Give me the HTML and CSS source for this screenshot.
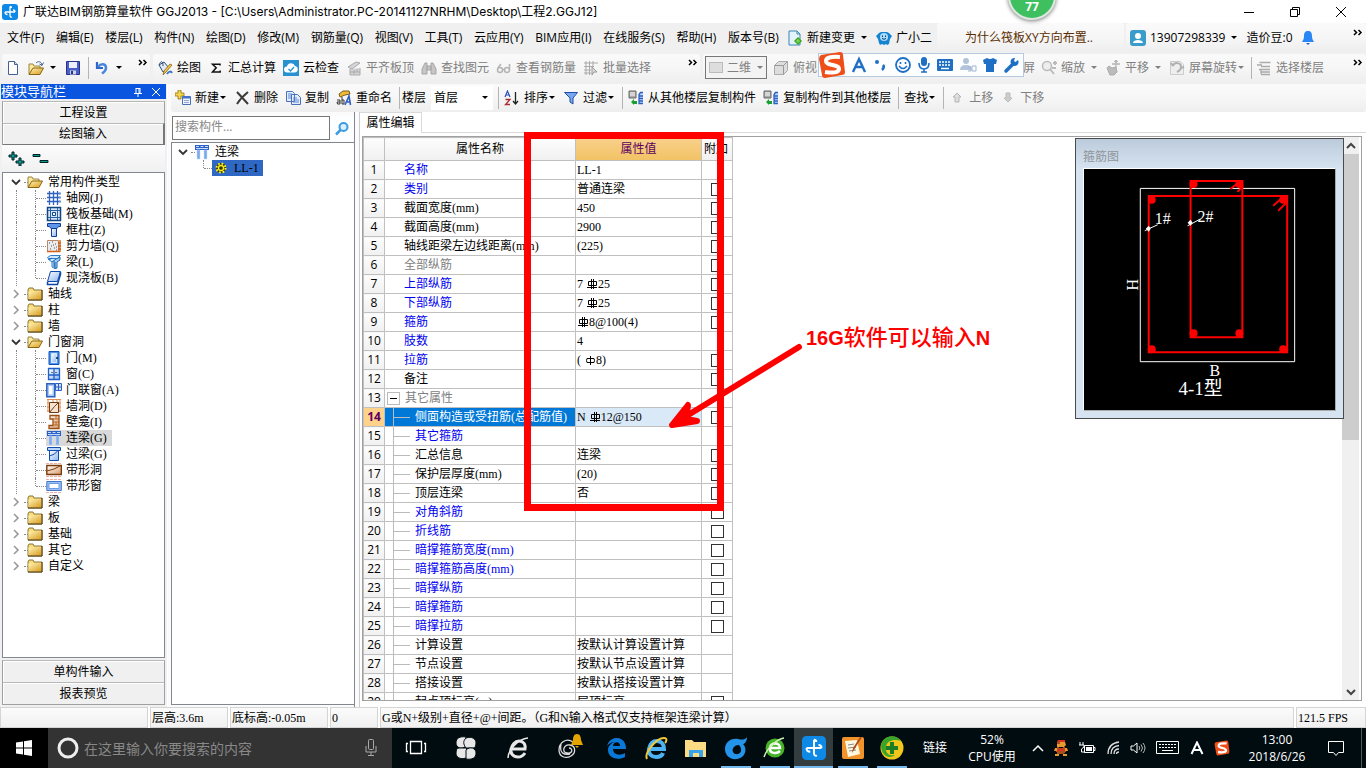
FILE: index.html
```html
<!DOCTYPE html>
<html lang="zh-CN">
<head>
<meta charset="utf-8">
<title>广联达BIM钢筋算量软件 GGJ2013</title>
<link rel="stylesheet" href="styles.css">
</head>
<body>
<svg class="defs" aria-hidden="true">
  <defs>
    <linearGradient id="gold" x1="0" y1="0" x2="1" y2="1"><stop offset="0" stop-color="#fff3b8"/><stop offset="1" stop-color="#d99a1a"/></linearGradient>
    <linearGradient id="blue" x1="0" y1="0" x2="1" y2="1"><stop offset="0" stop-color="#fff"/><stop offset="1" stop-color="#8ab4f0"/></linearGradient>
    <linearGradient id="brown" x1="0" y1="0" x2="1" y2="1"><stop offset="0" stop-color="#fff"/><stop offset="1" stop-color="#d99a6a"/></linearGradient>
  </defs>
  <symbol id="logo" viewBox="0 0 16 16"><rect width="16" height="16" rx="3" fill="#0e8ae6"/><path d="M8 2.500v9M3 8h10M3 8c0 2 1 2.500 2.500 2.500M13 8c0-1.500-1-2-2-2M8 11.500c0 1.500 1 2 2 1.500M8 2.500c1 0 1.500.5 1.500 1.500" fill="none" stroke="#fff" stroke-width="1.300"/></symbol>
  <symbol id="folder" viewBox="0 0 16 16"><path d="M1 4l1-2h4l1 2h8v10H1z" fill="#f7dd7c" stroke="#8a7430"/><path d="M1.500 5.500h13v8h-13z" fill="url(#gold)"/><path d="M15 4v10H1" fill="none" stroke="#4a3a10"/></symbol>
  <symbol id="folder-open" viewBox="0 0 16 16"><path d="M1 13V3h4l1 2h6v2" fill="#fbe9a0" stroke="#9a8340"/><path d="M1 13.500L5 7h10.500L12 13.500z" fill="url(#gold)" stroke="#8a6410"/></symbol>
  <symbol id="t-open" viewBox="0 0 16 16"><path d="M1 14V4h4l1 2h6v2" fill="#fbe9a0" stroke="#9a8340"/><path d="M1 14.500L5 8h10.500L12 14.500z" fill="url(#gold)" stroke="#8a6410"/><path d="M8 3c2-2 5-2 6 2M15.500 2.500L14 5.500 11.500 4" fill="none" stroke="#3a5f9a"/></symbol>
  <symbol id="i-axis" viewBox="0 0 16 16"><path d="M3.500 1v14M7.500 1v14M11.500 1v14M1 3.500h13M1 7.500h13M1 11.500h13" stroke="#2f62c0" stroke-width="1.300"/><path d="M13 2.500h2v2h-2zM13 6.500h2v2h-2zM13 10.500h2v2h-2z" fill="#6c93dc"/></symbol>
  <symbol id="i-raft" viewBox="0 0 16 16"><rect x="1.500" y="1.500" width="13" height="13" fill="#d5e6fa" stroke="#12457f" stroke-width="1.500"/><path d="M4.500 2v12M11.500 2v12M2 4.500h12M2 11.500h12" stroke="#2a62a5"/><path d="M6.500 6.500h3v3h-3z" fill="#fff" stroke="#12457f"/></symbol>
  <symbol id="i-col" viewBox="0 0 16 16"><path d="M1.500 1.500h13v3h-2l-1.500 2H5l-1.500-2h-2z" fill="#5d95e8" stroke="#123c94"/><path d="M5.500 6.500h5v8h-5z" fill="url(#blue)" stroke="#123c94"/></symbol>
  <symbol id="i-wall" viewBox="0 0 16 16"><path d="M1.500 2.500h11v11h-11z" fill="#ececec" stroke="#b98a68"/><path d="M3 5h1M6 4h1M9 6h1M5 8h1M8 10h1M4 11h1M10 9h1M7 7h1M10 12h1" stroke="#555"/><path d="M14 2v12M12 5h3M12 8h3M12 11h3M1 13.500h13" stroke="#d2601a" stroke-width="1.300"/></symbol>
  <symbol id="i-beam" viewBox="0 0 16 16"><path d="M1.500 3.500l3-2h10l-3 3H2zM2 5l4 3v5l3 1.500V8l5-5" fill="#cfe6fb" stroke="#2c7ed0"/><path d="M6 8l4-3 4-2v3l-3 2v6l-2 .5V8M3 6l3-2M8 13V7" fill="#9fcbf5" stroke="#1b67b5"/></symbol>
  <symbol id="i-slab" viewBox="0 0 16 16"><path d="M4.500 1.500h10l-3 10h-10z" fill="url(#blue)" stroke="#0d47a8"/><path d="M1.500 12v2.500h10l3-10V2" fill="none" stroke="#0d47a8" stroke-width="1.500"/></symbol>
  <symbol id="i-door" viewBox="0 0 16 16"><path d="M3 1.500h10v13H3z" fill="#4f94f0" stroke="#0f50b4"/><path d="M5.500 3.500h5v9h-5z" fill="url(#blue)" stroke="#dceaff"/><path d="M10 8h2" stroke="#001c58" stroke-width="1.500"/></symbol>
  <symbol id="i-window" viewBox="0 0 16 16"><path d="M2.500 2.500h11v11h-11z" fill="url(#blue)" stroke="#1f5fc8" stroke-width="1.300"/><path d="M8 2v12M2 9h12" stroke="#1f5fc8" stroke-width="1.300"/><path d="M6 6v1M10 6v1" stroke="#012"/></symbol>
  <symbol id="i-dw" viewBox="0 0 16 16"><path d="M.8 1.800h8v13h-8z" fill="#a8c9f7" stroke="#2e60c0" stroke-width="1.500"/><path d="M3 4h3.500v8.500H3z" fill="#fff"/><path d="M9.500 1.500h6v7h-6zM12.500 1v8M9 5h7" fill="#cde0fb" stroke="#2e60c0"/></symbol>
  <symbol id="i-hole" viewBox="0 0 16 16"><path d="M1 1.500h14M1 5h3M1 9h3M1 13h3M13 5h2M13 9h2M13 13h2M2 1v13M14 1v13M7 1v3M11 1v3" stroke="#e08a50"/><path d="M3.500 4.500h9v10h-9z" fill="#f7e2d0" stroke="#6d3b14"/><path d="M3.500 14.500l5-6 4-4" fill="none" stroke="#6d3b14"/></symbol>
  <symbol id="i-niche" viewBox="0 0 16 16"><path d="M4 1.500h9v13H3v-3h4V5H4z" fill="url(#brown)" stroke="#9a5014" stroke-width="1.300"/><path d="M7 5h6M7 8h6M7 11h6M10 2v3M10 8v3" stroke="#b86a2a"/></symbol>
  <symbol id="i-lian" viewBox="0 0 16 16"><path d="M1 1h14v5H1z" fill="#2a60c8"/><path d="M2 2.500h3M6.500 2.500h3M11 2.500h3M2 4.500h12" stroke="#c5dbfb"/><path d="M3 6h3v9H3zM10 6h3v9h-3z" fill="#7da9ec" stroke="#c2d8f8" stroke-width=".5"/></symbol>
  <symbol id="i-guo" viewBox="0 0 16 16"><path d="M1.500 1.500h13v3h-13z" fill="#b9d5fb" stroke="#0f4eb0"/><path d="M3.500 4.500h9v10h-9z" fill="url(#blue)" stroke="#0f4eb0"/><path d="M3.500 10l5-2 3-3" fill="none" stroke="#0f4eb0"/></symbol>
  <symbol id="i-bandh" viewBox="0 0 16 16"><path d="M0 1.500h16M0 14.500h16" stroke="#f3aaa0" stroke-dasharray="3 1"/><path d="M.8 3.500h14.500v9H.8z" fill="url(#brown)" stroke="#7c3c0a" stroke-width="1.400"/><path d="M1 9l7-2 7-3.500" stroke="#7c3c0a" fill="none"/></symbol>
  <symbol id="i-bandw" viewBox="0 0 16 16"><path d="M0 1.500h16M0 14.500h16" stroke="#f3aaa0" stroke-dasharray="3 1"/><path d="M.8 3.500h14.500v9H.8z" fill="#9cc0f5" stroke="#4374c8"/><path d="M3 5.500h10v5H3z" fill="#fff" stroke="#6d9be4"/></symbol>
  <symbol id="gear" viewBox="0 0 16 16"><circle cx="8" cy="8" r="5" fill="#3a3808"/><circle cx="8" cy="8" r="4.500" fill="none" stroke="#f7ef20" stroke-width="2" stroke-dasharray="1.800 1.730"/><circle cx="8" cy="8" r="2.500" fill="#3a3808" stroke="#f7ef20" stroke-width="1.300"/></symbol>
  <symbol id="chev-d" viewBox="0 0 10 10"><path d="M1 3l4 4 4-4" fill="none" stroke="#333" stroke-width="1.800"/></symbol>
  <symbol id="chev-r" viewBox="0 0 10 10"><path d="M3 1l4 4-4 4" fill="none" stroke="#999" stroke-width="1.600"/></symbol>
  <symbol id="more" viewBox="0 0 10 8"><path d="M1 1l2.500 2.500L1 6M5.500 1L8 3.500 5.500 6" fill="none" stroke="#000" stroke-width="1.500"/></symbol>
  <symbol id="t-new" viewBox="0 0 16 16"><path d="M3.500 1.500h6l3 3v10h-9z" fill="#fff" stroke="#44618f"/><path d="M9.500 1.500v3h3" fill="#cfdcf0" stroke="#44618f"/></symbol>
  <symbol id="t-save" viewBox="0 0 16 16"><path d="M1.500 1.500h13v13h-13z" fill="#4a60c8" stroke="#27348c"/><path d="M4 2h8v6H4z" fill="#eef1fb"/><path d="M5 10.500h6v4H5z" fill="#cfd3e6"/><path d="M6 11h2v3H6z" fill="#27348c"/></symbol>
  <symbol id="t-undo" viewBox="0 0 16 16"><path d="M3 2v6h6" fill="none" stroke="#2d66c8" stroke-width="2.200"/><path d="M4 7c3-4 8-3.500 8 1 0 3-2 4-4 5.500" fill="none" stroke="#4a86dc" stroke-width="2.500"/></symbol>
  <symbol id="t-draw" viewBox="0 0 16 16"><path d="M2 5l5-3 5 6-6 4z" fill="#dfe8f4" stroke="#30507a"/><path d="M2 5c2-5 4-4 4 1" fill="none" stroke="#30507a"/><path d="M15 5l-6 7-3 3 1-4 6-7z" fill="#f3c64a" stroke="#8a6414" stroke-width=".8"/><path d="M10 14c2-3 4-3 5-1" stroke="#3f76c8" stroke-width="2" fill="none"/></symbol>
  <symbol id="t-sum" viewBox="0 0 16 16"><path d="M12 5.500V4.200H4.500l3.700 3.500L4.500 12h7.700v-1.500" fill="none" stroke="#111" stroke-width="1.500"/></symbol>
  <symbol id="t-cloud" viewBox="0 0 16 16"><rect width="16" height="16" fill="#2892d0"/><path d="M4 12.500a3 3 0 010-6 4.200 4.200 0 018-.5 3.300 3.300 0 010 6.500z" fill="#fff"/><path d="M5.500 9l2 2 3.500-4" fill="none" stroke="#2892d0" stroke-width="1.300"/></symbol>
  <symbol id="g-align" viewBox="0 0 16 16"><path d="M2 7l8-5 4 1-8 6zM4 9v6h10V8" fill="#d5d5d5" stroke="#aaa"/><path d="M4 12h10M8 10v4M11 9v3" stroke="#aaa"/></symbol>
  <symbol id="g-find" viewBox="0 0 16 16"><path d="M2 7l2-4h2v11H1V9zM14 7l-2-4h-2v11h5V9zM6 6h4v4H6z" fill="#c6c6c6" stroke="#a5a5a5"/></symbol>
  <symbol id="g-glass" viewBox="0 0 16 16"><circle cx="4" cy="10" r="2.500" fill="none" stroke="#b5b5b5" stroke-width="1.500"/><circle cx="11" cy="10" r="2.500" fill="none" stroke="#b5b5b5" stroke-width="1.500"/><path d="M2 8l3-4M13.500 10V4M6 9.500h3" stroke="#b5b5b5" stroke-width="1.500"/></symbol>
  <symbol id="g-batch" viewBox="0 0 16 16"><path d="M3 1v14M6.500 1v14M10 1v6M1 3h14M1 6.500h10M1 10h7M1 13h7" stroke="#aaa"/><path d="M9 7l5 5h-3l-2 3z" fill="#ddd" stroke="#999"/></symbol>
  <symbol id="g-cube" viewBox="0 0 16 16"><path d="M1.500 5.500l4-4h9v9l-4 4h-9z" fill="#ddd" stroke="#aaa"/><path d="M1.500 5.500h9v9M10.500 5.500l4-4" fill="none" stroke="#999"/></symbol>
  <symbol id="g-zoom" viewBox="0 0 16 16"><circle cx="6" cy="6" r="4.500" fill="#eee" stroke="#bbb" stroke-width="1.500"/><path d="M9 9l4 5M12 3h4M14 1v4M11 8h4" stroke="#bbb" stroke-width="2"/></symbol>
  <symbol id="g-pan" viewBox="0 0 16 16"><path d="M2 8l2-2 3 2 4-1 1 5-3 3H5z" fill="#bbb" stroke="#aaa"/><path d="M11 0v8M7 4h8M11 0L9.500 2M11 0l1.500 2" stroke="#b5b5b5" stroke-width="1.300"/></symbol>
  <symbol id="g-rot" viewBox="0 0 16 16"><path d="M1.500 1.500h10l3 3v10h-13z" fill="#eee" stroke="#ccc"/><path d="M4 6c1-4 8-4 8 1 0 3-2 4-4 5M12 8l3-1M4 6L2 3" fill="none" stroke="#b0b0b0" stroke-width="2"/></symbol>
  <symbol id="g-floor" viewBox="0 0 16 16"><path d="M1 5h5M3.500 2.500h11M5 6.500h9M3 9.500h11M5 9v5M5 12h9M5 14.500h9" fill="none" stroke="#aaa" stroke-width="1.300"/></symbol>
  <symbol id="c-new" viewBox="0 0 16 16"><path d="M3 0h3v3h3v3H6v3H3V6H0V3h3z" fill="#f4d44a" stroke="#8f7410" stroke-width=".8"/><path d="M7.500 6.500h8v8h-8z" fill="#eef4ff" stroke="#4a70b8"/><path d="M7.500 7.500h8" stroke="#3f72d0" stroke-width="2"/><path d="M9 10.500h5M9 12.500h5" stroke="#8fa9d8"/></symbol>
  <symbol id="c-del" viewBox="0 0 16 16"><path d="M3 2l11 12M14 2C9 6 6 9 3 14" stroke="#3a3a3a" stroke-width="2" fill="none"/></symbol>
  <symbol id="c-copy" viewBox="0 0 16 16"><path d="M1.500 1.500h6l2 2v8h-8zM6.500 4.500h6l3 3v7h-9z" fill="#e3edfc" stroke="#4a70b8"/><path d="M3 4h4M3 6h3M3 8h3M8 8h4M8 10h6M8 12h6" stroke="#5d88cf"/></symbol>
  <symbol id="c-ren" viewBox="0 0 16 16"><path d="M3 4l4-3h6l1 3-5 1-5 2z" fill="#f0bb3c" stroke="#7d5c14"/><path d="M1 10h3v4H1.500l-.5-2h3M6 7v7h2v-4H6" fill="none" stroke="#333"/><path d="M9 15l4-9 1.500 9M10 12h4" fill="none" stroke="#2d60c0" stroke-width="1.600"/></symbol>
  <symbol id="c-sort" viewBox="0 0 16 16"><path d="M1 7l2.500-6L6 7M2 5h3" fill="none" stroke="#2d50b8" stroke-width="1.200"/><path d="M1.500 9.500H6l-4.500 5H6" fill="none" stroke="#a83030" stroke-width="1.300"/><path d="M11.500 2v12M9 11l2.500 3 2.500-3" fill="none" stroke="#222" stroke-width="1.300"/></symbol>
  <symbol id="c-filt" viewBox="0 0 16 16"><path d="M1.500 2.500h13L10 8v6l-3-2V8z" fill="#78a8ee" stroke="#204ea8"/></symbol>
  <symbol id="c-fl" viewBox="0 0 16 16"><path d="M1 1h7v7H1z" fill="#aaa" stroke="#666"/><path d="M2 3h5M2 5h5" stroke="#fff"/><path d="M15 2.500h-2.500l-1.500 2v9h4M11 6h4M11 8.500h4M11 11h4" fill="#bcd5fa" stroke="#2c60c0" stroke-width="1.300"/><path d="M3 12l3-3v2h3V9v5H6v1z" fill="#18a030"/></symbol>
  <symbol id="c-up" viewBox="0 0 16 16"><path d="M8 3l4 4H10v5H6V7H4z" fill="#ddd" stroke="#b5b5b5"/></symbol>
  <symbol id="c-dn" viewBox="0 0 16 16"><path d="M8 12l4-4H10V3H6v5H4z" fill="#ccc" stroke="#bbb"/></symbol>
  <symbol id="m-new" viewBox="0 0 16 16"><path d="M2 1h8l3 3v11H2z" fill="#e4f2fb" stroke="#3788b8"/><path d="M10 1v3h3" fill="none" stroke="#3788b8"/><path d="M11 7l4 4-4 4-4-4z" fill="#39a81c"/><path d="M11 9v4M9 11h4" stroke="#8fe070"/></symbol>
  <symbol id="m-bot" viewBox="0 0 16 16"><path d="M3 3l2-1h6l2 1 3 3-2 3-1 5-2 1-1-1-2 1-2-1-2 1-1-2-1-4-2-3z" fill="#1583d0"/><circle cx="8" cy="7" r="4" fill="#a9dcfb"/><path d="M6.500 5.500v1.500M9.500 5.500v1.500M6 8.500q2 1.500 4 0" stroke="#0a3a70" fill="none"/></symbol>
  <symbol id="m-user" viewBox="0 0 16 16"><rect width="16" height="16" rx="3" fill="#3a9cca"/><circle cx="8" cy="6" r="3" fill="#fff"/><path d="M3 13c0-4 10-4 10 0z" fill="#fff"/></symbol>
  <symbol id="m-bell" viewBox="0 0 16 16"><path d="M8 1c3 0 4 2 4 5 0 3 1 4 2 6H2c1-2 2-3 2-6 0-3 1-5 4-5z" fill="#2a86f4"/><path d="M6 13h4l-2 2z" fill="#2060c8"/></symbol>
  <symbol id="sogou" viewBox="0 0 28 28"><path d="M3 4l19-3q3 0 3 3l2 17q0 3-3 3L7 27q-3 0-3-3L1 8q0-3 2-4z" fill="#f04e18"/><path d="M22 6q-14-1-14 4c0 5 13 3 13 8 0 4-7 4-14 3" fill="none" stroke="#fff" stroke-width="4"/></symbol>
  <symbol id="reb3" viewBox="0 0 12 12"><path d="M2.500 3.500h8v4h-8zM5.500 1v10M7.500 1v10M1 9.500h10" fill="none" stroke="#000"/></symbol>
  <symbol id="reb1" viewBox="0 0 12 12"><path d="M3 4.500h7l.5 2-.5 2H3l-.5-2zM6.500 2v9" fill="none" stroke="#000"/></symbol>
</svg>

<header class="title">
  <svg class="ic"><use href="#logo"/></svg>
  <h1>广联达BIM钢筋算量软件 GGJ2013 - [C:\Users\Administrator.PC-20141127NRHM\Desktop\工程2.GGJ12]</h1>
  <div class="winbtns">
    <button aria-label="最小化"><svg width="12" height="12"><path d="M1 6.500h10" stroke="#000"/></svg></button>
    <button aria-label="还原"><svg width="12" height="12"><path d="M1.500 3.500h7v7h-7zM3.500 3V1.500h7v7H9" fill="none" stroke="#000"/></svg></button>
    <button aria-label="关闭"><svg width="12" height="12"><path d="M1 1l10 10M11 1L1 11" stroke="#000"/></svg></button>
  </div>
</header>

<nav class="menu">
  <div class="menus">
    <button>文件(F)</button><button>编辑(E)</button><button>楼层(L)</button><button>构件(N)</button><button>绘图(D)</button><button>修改(M)</button><button>钢筋量(Q)</button><button>视图(V)</button><button>工具(T)</button><button>云应用(Y)</button><button>BIM应用(I)</button><button>在线服务(S)</button><button>帮助(H)</button><button>版本号(B)</button>
  </div>
  <div class="bar extra">
    <button class="tb"><svg class="ic"><use href="#m-new"/></svg>新建变更<i class="ar wide"></i></button>
    <button class="tb"><svg class="ic"><use href="#m-bot"/></svg>广小二</button>
  </div>
  <a class="strip tip" href="#">为什么筏板XY方向布置..</a>
  <div class="strip bar user">
    <button class="tb"><svg class="ic"><use href="#m-user"/></svg>13907298339<i class="ar wide"></i></button>
    <span>造价豆:0</span>
    <svg class="ic"><use href="#m-bell"/></svg>
    <svg class="more"><use href="#more"/></svg>
  </div>
</nav>

<div class="tools">
  <div class="strip bar t1">
    <button class="tb" aria-label="新建"><svg class="ic"><use href="#t-new"/></svg></button>
    <button class="tb" aria-label="打开"><svg class="ic"><use href="#t-open"/></svg><i class="ar wide"></i></button>
    <button class="tb" aria-label="保存"><svg class="ic"><use href="#t-save"/></svg></button>
    <i class="sep"></i>
    <button class="tb" aria-label="撤销"><svg class="ic"><use href="#t-undo"/></svg><i class="ar wide"></i></button>
    <svg class="more"><use href="#more"/></svg>
  </div>
  <div class="strip bar t2">
    <button class="tb"><svg class="ic"><use href="#t-draw"/></svg>绘图</button>
    <button class="tb"><svg class="ic"><use href="#t-sum"/></svg>汇总计算</button>
    <button class="tb"><svg class="ic"><use href="#t-cloud"/></svg>云检查</button>
    <button class="tb off"><svg class="ic"><use href="#g-align"/></svg>平齐板顶</button>
    <button class="tb off"><svg class="ic"><use href="#g-find"/></svg>查找图元</button>
    <button class="tb off"><svg class="ic"><use href="#g-glass"/></svg>查看钢筋量</button>
    <button class="tb off"><svg class="ic"><use href="#g-batch"/></svg>批量选择</button>
    <svg class="more"><use href="#more"/></svg>
  </div>
  <div class="strip bar t3">
    <button class="view off"><i class="swatch"></i>二维<i class="ar wide"></i></button>
    <button class="tb off"><svg class="ic"><use href="#g-cube"/></svg>俯视</button>
    <button class="tb off full">全屏</button>
    <button class="tb off"><svg class="ic"><use href="#g-zoom"/></svg>缩放<i class="ar wide"></i></button>
    <button class="tb off"><svg class="ic"><use href="#g-pan"/></svg>平移<i class="ar wide"></i></button>
    <button class="tb off"><svg class="ic"><use href="#g-rot"/></svg>屏幕旋转<i class="ar"></i></button>
    <i class="sep"></i>
    <button class="tb off"><svg class="ic"><use href="#g-floor"/></svg>选择楼层</button>
    <svg class="more"><use href="#more"/></svg>
  </div>
  <div class="ime">
    <svg class="big"><use href="#sogou"/></svg>
    <svg width="18" height="18" viewBox="0 0 18 18"><path d="M3 16L9 3l6 13M5 11h8" fill="none" stroke="#1f6fc4" stroke-width="2.400"/></svg>
    <svg width="16" height="18" viewBox="0 0 16 18"><circle cx="4" cy="6" r="2" fill="#1f6fc4"/><path d="M10 9q2 2-1 5" fill="none" stroke="#1f6fc4" stroke-width="2.500"/></svg>
    <svg width="18" height="18" viewBox="0 0 18 18"><circle cx="9" cy="9" r="7" fill="none" stroke="#1f6fc4" stroke-width="1.800"/><path d="M6.500 6v2M11.500 6v2M5 10q4 5 8 0" fill="none" stroke="#1f6fc4" stroke-width="1.600"/></svg>
    <svg width="14" height="18" viewBox="0 0 14 18"><rect x="4" y="1" width="6" height="9" rx="3" fill="#1f6fc4"/><path d="M2 7q0 6 5 6t5-6M7 13v3M4 16h6" fill="none" stroke="#1f6fc4" stroke-width="1.600"/></svg>
    <svg width="18" height="18" viewBox="0 0 18 18"><rect x="1" y="3" width="16" height="12" rx="1" fill="#1f6fc4"/><path d="M3 6h12M3 9h12" stroke="#fff" stroke-width="1.500" stroke-dasharray="2 1"/><path d="M5 12.500h8" stroke="#fff" stroke-width="1.500"/></svg>
    <svg width="18" height="18" viewBox="0 0 18 18"><circle cx="7" cy="5" r="3" fill="#b3c3da"/><path d="M1 14q0-5 6-5 4 0 5 2v3z" fill="#b3c3da"/><path d="M9 11h3v4H9M13 10h4v5h-4z" fill="none" stroke="#9fb3d0"/></svg>
    <svg width="16" height="18" viewBox="0 0 16 18"><path d="M1 4l4-2q3 2 6 0l4 2-1 4h-2v8H4V8H2z" fill="#1f6fc4"/></svg>
    <svg width="18" height="18" viewBox="0 0 18 18"><path d="M3 15l7-7" stroke="#1f6fc4" stroke-width="3.500" stroke-linecap="round"/><path d="M15 4a4 4 0 11-3-2l-1 3 1.500 1z" fill="#1f6fc4"/></svg>
  </div>
</div>

<main>
  <aside>
    <div class="cap"><h2>模块导航栏</h2>
      <button aria-label="固定"><svg width="10" height="10"><path d="M3 1v5M7 1v5M6 1v5M3 1.500h4M1 6.500h8M5 7v3" stroke="#fff"/></svg></button>
      <button aria-label="关闭"><svg width="10" height="10"><path d="M1 1l8 8M9 1L1 9" stroke="#fff"/></svg></button>
    </div>
    <button class="mod">工程设置</button>
    <button class="mod raised">绘图输入</button>
    <div class="exp">
      <button aria-label="全部展开"><svg width="17" height="15"><path d="M1 4h3V1h2v3h3v2H6v3H4V6H1zM8 10h3V7h2v3h3v2h-3v3h-2v-3H8z" fill="#0a9a90" stroke="#022" stroke-width="1"/></svg></button>
      <button aria-label="全部折叠"><svg width="17" height="15"><path d="M1 3.500h7v2H1zM8 9.500h8v2H8z" fill="#0a9a90" stroke="#022"/></svg></button>
    </div>
    <ul class="tree">
      <li><svg class="cv"><use href="#chev-d"/></svg><i class="dt"></i><svg class="ic"><use href="#folder-open"/></svg>常用构件类型</li>
      <li class="s"><i class="br"></i><svg class="ic"><use href="#i-axis"/></svg><span>轴网(J)</span></li>
      <li class="s"><i class="br"></i><svg class="ic"><use href="#i-raft"/></svg><span>筏板基础(M)</span></li>
      <li class="s"><i class="br"></i><svg class="ic"><use href="#i-col"/></svg><span>框柱(Z)</span></li>
      <li class="s"><i class="br"></i><svg class="ic"><use href="#i-wall"/></svg><span>剪力墙(Q)</span></li>
      <li class="s"><i class="br"></i><svg class="ic"><use href="#i-beam"/></svg><span>梁(L)</span></li>
      <li class="s last"><i class="br"></i><svg class="ic"><use href="#i-slab"/></svg><span>现浇板(B)</span></li>
      <li><svg class="cv"><use href="#chev-r"/></svg><i class="dt"></i><svg class="ic"><use href="#folder"/></svg>轴线</li>
      <li><svg class="cv"><use href="#chev-r"/></svg><i class="dt"></i><svg class="ic"><use href="#folder"/></svg>柱</li>
      <li><svg class="cv"><use href="#chev-r"/></svg><i class="dt"></i><svg class="ic"><use href="#folder"/></svg>墙</li>
      <li><svg class="cv"><use href="#chev-d"/></svg><i class="dt"></i><svg class="ic"><use href="#folder-open"/></svg>门窗洞</li>
      <li class="s"><i class="br"></i><svg class="ic"><use href="#i-door"/></svg><span>门(M)</span></li>
      <li class="s"><i class="br"></i><svg class="ic"><use href="#i-window"/></svg><span>窗(C)</span></li>
      <li class="s"><i class="br"></i><svg class="ic"><use href="#i-dw"/></svg><span>门联窗(A)</span></li>
      <li class="s"><i class="br"></i><svg class="ic"><use href="#i-hole"/></svg><span>墙洞(D)</span></li>
      <li class="s"><i class="br"></i><svg class="ic"><use href="#i-niche"/></svg><span>壁龛(I)</span></li>
      <li class="s cur"><i class="br"></i><svg class="ic"><use href="#i-lian"/></svg><span>连梁(G)</span></li>
      <li class="s"><i class="br"></i><svg class="ic"><use href="#i-guo"/></svg><span>过梁(G)</span></li>
      <li class="s"><i class="br"></i><svg class="ic"><use href="#i-bandh"/></svg><span>带形洞</span></li>
      <li class="s last"><i class="br"></i><svg class="ic"><use href="#i-bandw"/></svg><span>带形窗</span></li>
      <li><svg class="cv"><use href="#chev-r"/></svg><i class="dt"></i><svg class="ic"><use href="#folder"/></svg>梁</li>
      <li><svg class="cv"><use href="#chev-r"/></svg><i class="dt"></i><svg class="ic"><use href="#folder"/></svg>板</li>
      <li><svg class="cv"><use href="#chev-r"/></svg><i class="dt"></i><svg class="ic"><use href="#folder"/></svg>基础</li>
      <li><svg class="cv"><use href="#chev-r"/></svg><i class="dt"></i><svg class="ic"><use href="#folder"/></svg>其它</li>
      <li><svg class="cv"><use href="#chev-r"/></svg><i class="dt"></i><svg class="ic"><use href="#folder"/></svg>自定义</li>
    </ul>
    <button class="mod">单构件输入</button>
    <button class="mod">报表预览</button>
  </aside>

  <section class="work">
    <div class="strip bar edit">
      <button class="tb"><svg class="ic"><use href="#c-new"/></svg>新建<i class="ar"></i></button>
      <button class="tb"><svg class="ic"><use href="#c-del"/></svg>删除</button>
      <button class="tb"><svg class="ic"><use href="#c-copy"/></svg>复制</button>
      <button class="tb"><svg class="ic"><use href="#c-ren"/></svg>重命名</button>
      <i class="sep"></i>
      <label class="floor">楼层<select><option>首层</option></select><i class="ar"></i></label>
      <i class="sep"></i>
      <button class="tb"><svg class="ic"><use href="#c-sort"/></svg>排序<i class="ar"></i></button>
      <button class="tb"><svg class="ic"><use href="#c-filt"/></svg>过滤<i class="ar"></i></button>
      <i class="sep"></i>
      <button class="tb"><svg class="ic"><use href="#c-fl"/></svg>从其他楼层复制构件</button>
      <button class="tb"><svg class="ic"><use href="#c-fl"/></svg>复制构件到其他楼层</button>
      <i class="sep"></i>
      <button class="tb find-btn">查找<i class="ar"></i></button>
      <i class="sep"></i>
      <button class="tb off"><svg class="ic"><use href="#c-up"/></svg>上移</button>
      <button class="tb off"><svg class="ic"><use href="#c-dn"/></svg>下移</button>
    </div>
    <div class="cols">
      <div class="comp">
        <div class="search"><input type="search" placeholder="搜索构件..." aria-label="搜索构件"><button aria-label="搜索"><svg width="16" height="16"><circle cx="9.500" cy="6" r="4" fill="#d9efff" stroke="#3c9be0" stroke-width="2"/><path d="M6.500 9L2 13.500" stroke="#3c9be0" stroke-width="2.500"/></svg></button></div>
        <ul class="tree list">
          <li><svg class="cv"><use href="#chev-d"/></svg><i class="dt"></i><svg class="ic"><use href="#i-lian"/></svg>连梁</li>
          <li class="s last sel"><i class="br"></i><span class="pick"><svg class="ic"><use href="#gear"/></svg>LL-1</span></li>
        </ul>
      </div>
      <div class="pane">
        <div class="tabs"><button>属性编辑</button></div>
        <div class="sheet">
          <div class="scroller">
          <table>
            <colgroup><col class="c1"><col class="c2"><col class="c3"><col class="c4"></colgroup>
            <thead><tr><th></th><th>属性名称</th><th class="hot">属性值</th><th class="att">附加</th></tr></thead>
            <tbody>
              <tr><th>1</th><td class="k b">名称</td><td>LL-1</td><td></td></tr>
              <tr><th>2</th><td class="k b">类别</td><td>普通连梁</td><td><input type="checkbox" aria-label="附加"></td></tr>
              <tr><th>3</th><td class="k">截面宽度(mm)</td><td>450</td><td><input type="checkbox" aria-label="附加"></td></tr>
              <tr><th>4</th><td class="k">截面高度(mm)</td><td>2900</td><td><input type="checkbox" aria-label="附加"></td></tr>
              <tr><th>5</th><td class="k">轴线距梁左边线距离(mm)</td><td>(225)</td><td><input type="checkbox" aria-label="附加"></td></tr>
              <tr><th>6</th><td class="k g">全部纵筋</td><td></td><td><input type="checkbox" aria-label="附加"></td></tr>
              <tr><th>7</th><td class="k b">上部纵筋</td><td>7 <svg class="rb"><use href="#reb3"/></svg>25</td><td><input type="checkbox" aria-label="附加"></td></tr>
              <tr><th>8</th><td class="k b">下部纵筋</td><td>7 <svg class="rb"><use href="#reb3"/></svg>25</td><td><input type="checkbox" aria-label="附加"></td></tr>
              <tr><th>9</th><td class="k b">箍筋</td><td><svg class="rb"><use href="#reb3"/></svg>8@100(4)</td><td><input type="checkbox" aria-label="附加"></td></tr>
              <tr><th>10</th><td class="k b">肢数</td><td>4</td><td></td></tr>
              <tr><th>11</th><td class="k b">拉筋</td><td>( <svg class="rb"><use href="#reb1"/></svg>8)</td><td><input type="checkbox" aria-label="附加"></td></tr>
              <tr><th>12</th><td class="k">备注</td><td></td><td><input type="checkbox" aria-label="附加"></td></tr>
              <tr><th>13</th><td class="g"><div class="n"><button class="fold" aria-label="折叠"></button>其它属性</div></td><td></td><td></td></tr>
              <tr class="on"><th>14</th><td><div class="n"><i class="v"></i><i class="h"></i>侧面构造或受扭筋(总配筋值)</div></td><td>N <svg class="rb"><use href="#reb3"/></svg>12@150</td><td><input type="checkbox" aria-label="附加"></td></tr>
              <tr><th>15</th><td class="b"><div class="n"><i class="v"></i><i class="h"></i>其它箍筋</div></td><td></td><td></td></tr>
              <tr><th>16</th><td><div class="n"><i class="v"></i><i class="h"></i>汇总信息</div></td><td>连梁</td><td><input type="checkbox" aria-label="附加"></td></tr>
              <tr><th>17</th><td><div class="n"><i class="v"></i><i class="h"></i>保护层厚度(mm)</div></td><td>(20)</td><td><input type="checkbox" aria-label="附加"></td></tr>
              <tr><th>18</th><td><div class="n"><i class="v"></i><i class="h"></i>顶层连梁</div></td><td>否</td><td><input type="checkbox" aria-label="附加"></td></tr>
              <tr><th>19</th><td class="b"><div class="n"><i class="v"></i><i class="h"></i>对角斜筋</div></td><td></td><td><input type="checkbox" aria-label="附加"></td></tr>
              <tr><th>20</th><td class="b"><div class="n"><i class="v"></i><i class="h"></i>折线筋</div></td><td></td><td><input type="checkbox" aria-label="附加"></td></tr>
              <tr><th>21</th><td class="b"><div class="n"><i class="v"></i><i class="h"></i>暗撑箍筋宽度(mm)</div></td><td></td><td><input type="checkbox" aria-label="附加"></td></tr>
              <tr><th>22</th><td class="b"><div class="n"><i class="v"></i><i class="h"></i>暗撑箍筋高度(mm)</div></td><td></td><td><input type="checkbox" aria-label="附加"></td></tr>
              <tr><th>23</th><td class="b"><div class="n"><i class="v"></i><i class="h"></i>暗撑纵筋</div></td><td></td><td><input type="checkbox" aria-label="附加"></td></tr>
              <tr><th>24</th><td class="b"><div class="n"><i class="v"></i><i class="h"></i>暗撑箍筋</div></td><td></td><td><input type="checkbox" aria-label="附加"></td></tr>
              <tr><th>25</th><td class="b"><div class="n"><i class="v"></i><i class="h"></i>暗撑拉筋</div></td><td></td><td><input type="checkbox" aria-label="附加"></td></tr>
              <tr><th>26</th><td><div class="n"><i class="v"></i><i class="h"></i>计算设置</div></td><td>按默认计算设置计算</td><td></td></tr>
              <tr><th>27</th><td><div class="n"><i class="v"></i><i class="h"></i>节点设置</div></td><td>按默认节点设置计算</td><td></td></tr>
              <tr><th>28</th><td><div class="n"><i class="v"></i><i class="h"></i>搭接设置</div></td><td>按默认搭接设置计算</td><td></td></tr>
              <tr><th>29</th><td><div class="n"><i class="v"></i><i class="h"></i>起点顶标高(m)</div></td><td>层顶标高</td><td><input type="checkbox" aria-label="附加"></td></tr>
            </tbody>
          </table>
          </div>
          <div class="sb"><button aria-label="向上"><svg width="10" height="10"><path d="M1 7l4-4 4 4" fill="none" stroke="#444" stroke-width="2"/></svg></button><i class="thumb"></i><button aria-label="向下"><svg width="10" height="10"><path d="M1 3l4 4 4-4" fill="none" stroke="#444" stroke-width="2"/></svg></button></div>
          <figure class="float">
            <figcaption>箍筋图</figcaption>
            <svg viewBox="0 0 252 242" class="dia">
              <path d="M56.500 19.500h155v174h-155z" fill="none" stroke="#fff"/>
              <path d="M65 27h139v157H65zM107 12h52v157h-52z" fill="none" stroke="#f00" stroke-width="2"/>
              <g fill="#f00"><circle cx="68" cy="31" r="4"/><circle cx="200" cy="31" r="4"/><circle cx="68" cy="181" r="4"/><circle cx="200" cy="181" r="4"/><circle cx="110" cy="15" r="4"/><circle cx="156" cy="15" r="4"/><circle cx="110" cy="165" r="4"/><circle cx="156" cy="165" r="4"/></g>
              <path d="M157 12l-10 8M160 17l-6 6M200 28l-10 9M204 33l-9 9" stroke="#f00" stroke-width="2"/>
              <path d="M61 62l4-2 9-4M104 57l4-2 9-5" stroke="#fff" fill="none"/><path d="M62 60l3-3 2 3-2 3zM104 54l3-3 2 3-2 3z" fill="#fff"/>
              <g class="cad"><text x="71" y="55">1#</text><text x="114" y="53">2#</text><text x="126" y="208">B</text><text transform="translate(54 122) rotate(-90)">H</text><text class="xl" x="95" y="227">4-1型</text></g>
            </svg>
          </figure>
        </div>
      </div>
    </div>
  </section>
</main>

<footer class="status">
  <span class="s1"></span><span class="s2">层高:3.6m</span><span class="s3">底标高:-0.05m</span><span class="s4">0</span><span class="s5">G或N+级别+直径+@+间距。（G和N输入格式仅支持框架连梁计算）</span><span class="s6">121.5 FPS</span>
</footer>

<div class="task">
  <button class="start" aria-label="开始"><svg width="16" height="16"><path d="M0 2.500l7-1v6H0zM8 1.300L16 0v7.500H8zM0 8.500h7v6l-7-1zM8 8.500h8V16l-8-1.300z" fill="#fff"/></svg></button>
  <label class="find"><svg width="22" height="22"><circle cx="11" cy="11" r="9" fill="none" stroke="#eee" stroke-width="3"/></svg><input type="text" placeholder="在这里输入你要搜索的内容" aria-label="搜索"><svg width="12" height="18"><rect x="3.500" y=".5" width="5" height="10" rx="1" fill="none" stroke="#aaa"/><path d="M1 7v6h10V7M6 13v4M3 16.500h6" fill="none" stroke="#aaa"/></svg></label>
  <button class="w48" aria-label="任务视图"><svg width="22" height="16"><path d="M5.500 1.500h11v12h-11zM3 3.500H1.500v8H3M19 3.500h1.500v8H19" fill="none" stroke="#fff" stroke-width="1.300"/></svg></button>
  <button class="w52" aria-label="应用"><svg width="24" height="24" viewBox="0 0 24 24"><g fill="#e8e8e8" stroke="#000c10"><path d="M12 1v9c-4 4-10 2-10-3s4-7 10-6z"/><path d="M12 2c6-2 10 1 10 5 0 3-1 5-3 5h-7c-3-4-3-7 0-10z"/><path d="M5 12h7c4 4 3 8 0 10-6 2-10-1-10-5 0-3 1-5 3-5z"/><path d="M12 14c4-4 10-2 10 3s-4 7-10 6z"/></g></svg></button>
  <button class="w52" aria-label="浏览器"><svg width="24" height="24" viewBox="0 0 24 24"><path d="M5 13h14c1-5-2-8-6-8s-7 4-8 8 2 8 7 8c3 0 5-1 7-4" fill="none" stroke="#e8e8e8" stroke-width="3"/><path d="M2 22C2 14 12 3 22 2" stroke="#e8e8e8" stroke-width="1.500" fill="none"/></svg></button>
  <button class="w52" aria-label="提醒"><svg width="28" height="28" viewBox="0 0 28 28"><path d="M17 8C10 3 3 9 3 16s7 9 12 6 5-10-1-11-9 7-3 8 6-5 2-5M5 10c-2 10 4 11 9 10" fill="none" stroke="#ddd" stroke-width="1.300"/><path d="M21 0c3 0 4 3 4 6l2 5H15l2-5c0-3 1-6 4-6zM19 12h4l-2 2z" fill="#e5a500"/></svg></button>
  <button class="w40" aria-label="Edge"><svg width="22" height="22" viewBox="0 0 22 22"><path d="M2 9C4 2 9 1 12 1c6 0 9 5 9 11H8c0 6 7 7 12 4v4c-7 4-17 1-17-7 0-4 3-7 7-8-5 0-7 3-8 4zM8 9h7c0-6-7-4-7 0z" fill="#0a78d8"/></svg></button>
  <button class="w40" aria-label="IE"><svg width="24" height="24" viewBox="0 0 24 24"><path d="M5 13h15c0-5-3-8-7-8s-7 3-8 8 3 8 7 8 6-1 7-4" fill="none" stroke="#4cb2f4" stroke-width="4"/><path d="M3 23C0 17 12 2 20 2c4 0 2 4 1 5" stroke="#f0c83a" stroke-width="2" fill="none"/></svg></button>
  <button class="w40" aria-label="资源管理器"><svg width="24" height="20" viewBox="0 0 24 20"><path d="M1 2h7l2 2h12v15H1z" fill="#fbdc84"/><path d="M5 19v-7h14v7h-4v-4H9v4z" fill="#38a3e8"/></svg></button>
  <button class="w39 run" aria-label="广联达"><svg width="24" height="24" viewBox="0 0 24 24"><path d="M23 1c-2 3-5 3-9 2C6 2 1 7 1 13c0 7 6 11 12 10 8-1 11-10 6-15l-4 1c3 3 3 8-1 9-5 1-7-4-4-7 2-2 4-2 6-2 5 0 7-4 7-8z" fill="#2494ea"/></svg></button>
  <button class="w39 run" aria-label="安全浏览器"><svg width="24" height="24" viewBox="0 0 24 24"><circle cx="12" cy="12" r="9.500" fill="#46b428"/><path d="M7 12h10c0-6-9-6-10 0s7 6 10 3" fill="none" stroke="#fff" stroke-width="2.500"/><path d="M1 21C4 12 14 3 21 2" stroke="#caf2b0" stroke-width="1.500" fill="none"/></svg></button>
  <button class="w39 act" aria-label="GGJ2013"><svg width="24" height="24"><use href="#logo"/></svg></button>
  <button class="w39 run" aria-label="便笺"><svg width="24" height="24" viewBox="0 0 24 24"><rect x="1" y="1" width="22" height="22" rx="2" fill="#f0932a"/><path d="M4 5l12-1 3 14-12 3z" fill="#fff8e0"/><path d="M7 9l6-1M7 12l8-1M8 15l7-1" stroke="#888"/><path d="M21 1l-8 13-2 3 1-5 7-11z" fill="#b04a18"/></svg></button>
  <button class="w39 run" aria-label="360"><svg width="24" height="24" viewBox="0 0 24 24"><circle cx="12" cy="12" r="11.500" fill="#f2c71c"/><path d="M1 10A11 11 0 0121 5c-6-2-14-1-15 6s4 9 9 8c-6 5-14 0-14-9z" fill="#3ba52a"/><path d="M10 6h4v4h4v4h-4v4h-4v-4H6v-4h4z" fill="#1c7c28"/></svg></button>
  <span class="link">链接</span>
  <span class="two cpu">52%<br>CPU使用</span>
  <div class="tray">
    <svg width="12" height="8"><path d="M1 7l5-5 5 5" fill="none" stroke="#fff" stroke-width="1.500"/></svg>
    <svg width="14" height="16" viewBox="0 0 14 16"><path d="M4 0h7v2H3zM2 8h10v4H2z" fill="#d83020"/><path d="M3 2h8l1 3-2 2H3zM1 8h2v3H0zM11 8h2l1 3h-3zM1 14h4v2H1zM9 14h4v2H9z" fill="#e89a30"/><path d="M3 2h3v2H3zM3 7h2v3H3zM9 7h2v3H9zM3 11h8v2l-2 1H5l-2 0z" fill="#a8501c"/></svg>
    <svg width="18" height="12" viewBox="0 0 18 12"><path d="M2 0v3M5 0v3M1 3h5v2L3.500 7V10H7" fill="none" stroke="#fff"/><path d="M6.500 3.500h9v7h-9zM16 5.500h1v3h-1" fill="none" stroke="#fff"/><path d="M8 5h6v4H8z" fill="#fff"/></svg>
    <svg width="14" height="14" viewBox="0 0 14 14"><path d="M2 13C2 6 6 2 13 1M5 13c0-5 3-8 8-8.500M8 13c0-3 2-5 5-5M10.500 13q0-2 2.500-2" fill="none" stroke="#ddd" stroke-width="1.300"/></svg>
    <svg width="16" height="14" viewBox="0 0 16 14"><path d="M1 5h2.500L7 2v10L3.500 9H1z" fill="none" stroke="#fff"/><path d="M9 5q1.500 2 0 4M11 3.500q3 3.500 0 7M13 2q4 5 0 10" fill="none" stroke="#bbb"/></svg>
    <svg width="24" height="14" viewBox="0 0 24 14"><path d="M.5.5h22v12H.5z" fill="none" stroke="#fff"/><path d="M3 3.500h17M3 6.500h17" stroke="#fff" stroke-dasharray="2 1"/><path d="M6 9.500h11" stroke="#fff"/></svg>
    <svg width="14" height="14" viewBox="0 0 14 14"><path d="M1.500 13L7 1.500 12.500 13M3.500 9h7" fill="none" stroke="#fff" stroke-width="2"/></svg>
    <svg width="16" height="16"><use href="#sogou"/></svg>
  </div>
  <span class="two clock">13:00<br>2018/6/26</span>
  <button class="note" aria-label="通知"><svg width="18" height="18"><path d="M1.500 2.500h15v11h-5l-2.500 3-2.500-3h-5z" fill="none" stroke="#fff"/></svg></button>
</div>

<div class="ball">77</div>
<svg class="mark" aria-hidden="true"><path d="M527.500 135.500h193v372h-193z" fill="none" stroke="#f00" stroke-width="7"/><g stroke="#f00" stroke-linejoin="round" stroke-linecap="round"><path d="M799 347L680 420" stroke-width="6"/><path d="M672 425l16-20-2 14 11 2z" fill="#f00" stroke-width="6"/></g></svg>
<p class="remark"><b>16G</b>软件可以输入<b>N</b></p>
</body>
</html>
```

FILE: styles.css
```css
* { box-sizing: border-box; }
html, body { height: 100%; }
body {
  margin: 0;
  display: flex;
  flex-direction: column;
  overflow: hidden;
  background: #f0f0f0;
  color: #000;
  font: 12px/16px "Open Sans", "Noto Sans CJK SC", sans-serif;
}
button {
  margin: 0; padding: 0; border: 0;
  background: none; color: inherit; font: inherit;
  white-space: nowrap;
}
h1, h2, p, ul, figure { margin: 0; padding: 0; font: inherit; }
i { flex: none; }
svg { flex: none; display: block; }
.defs { position: absolute; width: 0; height: 0; }
.ic { width: 16px; height: 16px; }
.more { width: 10px; height: 8px; margin: 0 2px 10px auto; }

/* title */
.title { display: flex; align-items: center; height: 23px; padding-left: 2px; gap: 5px; background: #fff; }
.title h1 { font-family: Inter, "Noto Sans CJK SC", sans-serif; }
.winbtns { display: flex; margin-left: auto; }
.winbtns button { width: 46px; display: grid; place-items: center; padding-right: 4px; }

/* menu */
.menu { display: flex; height: 29px; align-items: center; }
.menus { display: flex; gap: 10px; padding-left: 7px; width: 779px; justify-content: space-between; flex: none; }
.bar { display: flex; align-items: center; gap: 7px; }
.strip {
  height: 29px;
  border-radius: 3px;
  background: linear-gradient(#fafafa, #f6f6f6 50%, #eeeeee);
  white-space: nowrap;
}
.extra { width: 158px; padding-left: 8px; flex: none; }
.tip { width: 187px; padding: 7px 0 0 28px; margin-right: 2px; color: #5a2d00; text-decoration: none; flex: none; }
.user { flex: 1; padding-left: 4px; }
.tb { display: flex; align-items: center; gap: 4px; flex: none; height: 22px; }
.off { color: #808080; }
.ar { width: 8px; height: 4px; margin-left: -4px; display: flex; justify-content: center; }
.ar::after { content: ""; border: 3px solid transparent; border-top: 3px solid; border-bottom: 0; }
.ar.wide { width: 14px; padding-left: 4px; }
.sep { width: 1px; height: 22px; margin-right: -2px; background: #b4b4b4; }

/* toolbar */
.tools { position: relative; display: flex; gap: 3px; height: 32px; padding: 2px 0 0 2px; }
.tools .strip { padding-bottom: 2px; }
.t1 { width: 148px; padding-left: 3px; flex: none; }
.t2 { width: 547px; padding-left: 4px; flex: none; }
.t3 { flex: 1; padding-left: 2px; gap: 6px; }
.t3 .more, .user .more { margin-right: 3px; }
.view { display: flex; align-items: center; width: 62px; height: 23px; padding-left: 3px; gap: 4px; border: 1px solid #777; background: #f3f3f3; }
.swatch { width: 14px; height: 11px; border: 1px solid #bbb; background: #ddd; }
.full { width: 212px; justify-content: flex-end; }
.ime {
  position: absolute; left: 818px; top: 1px; width: 206px; height: 24px;
  display: flex; align-items: center; gap: 5px;
  border: 1px solid #b5cade; background: #fcfeff;
}
.big { width: 28px; height: 28px; margin: 0 -1px; }

/* body */
main { flex: 1; display: flex; min-height: 0; background: #fbfbfb; }
aside { width: 168px; flex: none; display: flex; flex-direction: column; padding: 0 2px 3px 2px; border-right: 1px solid #fff; background: #f0f0f0; }
.cap { display: flex; align-items: center; height: 15px; gap: 8px; padding-right: 5px; margin: 0 -1px 2px; background: #0a55e0; color: #fff; font-size: 13px; line-height: 15px; }
.cap h2 { margin-right: auto; }
.mod { height: 23px; flex: none; border: 1px solid #a0a0a0; border-top-color: #b8b8b8; margin-bottom: -1px; background: #f0f0f0; box-shadow: inset 1px 1px #fff; }
.raised { border-bottom: 2px solid #777; border-right: 2px solid #777; }
.exp { display: flex; align-items: center; gap: 7px; height: 27px; padding-left: 6px; flex: none; background: linear-gradient(#fcfcfc, #f0f0f0); }
.tree {
  flex: 1; min-height: 0; overflow: hidden; padding: 1px 0 0 8px; margin-bottom: 2px;
  border: 1px solid #828790; background: #fff; list-style: none;
  font-family: "Liberation Serif", "Noto Sans CJK SC", serif;
}
.tree li { display: flex; align-items: center; height: 16px; white-space: nowrap; }
.cv { width: 10px; height: 10px; }
.dt { width: 4px; margin-left: 3px; border-top: 1px dotted #888; }
.tree .ic { margin-right: 4px; }
.tree .dt + .ic { margin-left: -1px; margin-right: 5px; }
.s { padding-left: 24px; }
.s::before { content: ""; height: 16px; margin-left: -19px; margin-right: 18px; border-left: 1px dotted #888; }
.br { width: 11px; height: 16px; border-left: 1px dotted #888; }
.br::before { content: ""; display: block; height: 8px; border-bottom: 1px dotted #888; }
.last .br { height: 8px; align-self: flex-start; }
.cur .ic, .cur span { background: #d9d9d9; }
.cur span { margin-left: -4px; padding: 0 5px 0 4px; }

.work { flex: 1; min-width: 0; display: flex; flex-direction: column; padding-left: 3px; }
.edit { height: 28px; flex: none; padding-left: 4px; }
.floor { display: flex; align-items: center; gap: 5px; margin: 0 -3px; }
.floor select { appearance: none; width: 62px; height: 24px; padding: 0 3px; border: 0; background: #fff; font: inherit; color: #000; }
.floor .ar { margin-left: -17px; margin-right: 5px; pointer-events: none; }
.cols { flex: 1; min-height: 0; display: flex; gap: 4px; }
.comp { width: 184px; flex: none; display: flex; flex-direction: column; padding: 4px 0 0; border-right: 1px solid #828790; }
.search { display: flex; height: 25px; margin-bottom: 1px; }
.search input { width: 158px; height: 24px; margin-left: 1px; padding: 0 2px 3px; border: 1px solid #777; outline: 0; font: inherit; }
.search input::placeholder, .find input::placeholder { color: #888; opacity: 1; }
.search button { width: 25px; display: grid; place-items: center; background: #fdfeff; }
.list { padding: 1px 0 0 6px; border-right: 0; }
.list .s::before { display: none; }
.sel { padding-left: 25px; }
.sel .br { width: 9px; }
.pick { display: flex; width: 51px; padding-left: 1px; background: #2f68c4; }
.pick .ic { margin-right: 5px; }

.pane { flex: 1; min-width: 0; display: flex; flex-direction: column; background: #fff; border-left: 1px solid #ccc; }
.tabs { display: flex; height: 21px; flex: none; border-bottom: 1px solid #d9d9d9; }
.tabs button { width: 62px; height: 21px; background: #fff; border: 1px solid #d9d9d9; border-width: 1px 1px 0 0; }
.sheet {
  position: relative; flex: 1; min-height: 0; margin: 3px 4px 6px 2px; display: flex; overflow: hidden;
  border: 1px solid #a0a0a0;
}
.scroller { flex: 1; min-width: 0; overflow: hidden; }
table { width: 370px; table-layout: fixed; border-collapse: collapse; font-family: "Liberation Serif", "Noto Sans CJK SC", serif; }
.c1 { width: 21px; } .c2 { width: 191px; } .c3 { width: 126px; } .c4 { width: 31px; }
th, td { height: 19px; padding: 0 0 0 1px; line-height: 18px; text-align: left; font-weight: normal; border: 1px solid #c0c0c0; overflow: hidden; white-space: nowrap; }
th { padding: 0; text-align: center; background: linear-gradient(#fdfdfd, #f0f0f0); font-family: "Open Sans", "Noto Sans CJK SC", sans-serif; font-size: 12px; }
thead th { height: 23px; }
thead .hot { background: linear-gradient(#f8d08a, #f2c264); color: #600060; }
.att { text-align: left; padding-left: 2px; }
.k { padding-left: 19px; }
.b { color: #0000f0; }
.g { color: #808080; }
td input { appearance: none; display: block; width: 13px; height: 13px; margin: 0 0 0 8px; border: 1px solid #333; background: #fff; }
.n { display: flex; align-items: center; height: 18px; margin-left: -1px; }
.v { width: 9px; height: 19px; border-right: 1px solid #bbb; }
.h { width: 16px; height: 1px; margin-right: 5px; background: #bbb; }
.fold { width: 13px; height: 13px; margin: 0 5px 0 2px; border: 1px solid #bbb; display: grid; place-items: center; flex: none; }
.fold::after { content: ""; width: 7px; height: 1px; background: #000; }
.on th { background: #ffd28c; color: #600060; font-weight: bold; }
.on td:nth-child(2) { background: #0078d7; color: #fff; }
.on td:nth-child(3) { background: #d9e9f8; }
.rb { display: inline-block; width: 12px; height: 12px; vertical-align: -2px; }

.sb { width: 17px; margin-right: 2px; display: flex; flex-direction: column; background: #f0f0f0; }
.sb button { height: 17px; display: grid; place-items: center; }
.thumb { height: 286px; background: #cdcdcd; }
.sb button:last-child { margin-top: auto; }
.float { position: absolute; top: 1px; right: 17px; width: 269px; padding: 1px 7px 7px; border: 1px solid #4a4a4a; background: linear-gradient(#bccbdb, #d6e3f1 30px); }
figcaption { height: 28px; padding-top: 9px; margin-bottom: 1px; color: #8f959b; }
.dia { width: 253px; height: 243px; margin-top: -1px; border: 1px solid #fff; border-color: #fff #aaa #aaa #fff; background: #000; }
.cad { fill: #fff; font: 16px "Liberation Serif", "Noto Sans CJK SC", serif; }
.cad .xl { font-size: 19px; }

/* status */
.status { display: flex; gap: 2px; height: 21px; flex: none; background: #fff; font-family: "Liberation Serif", "Noto Sans CJK SC", serif; }
.status span { padding: 2px 1px; border: 1px solid #d4d4d4; background: linear-gradient(#fbfbfb, #f0f0f0); white-space: nowrap; }
.s1 { width: 148px; } .s2 { width: 78px; } .s3 { width: 98px; } .s4 { width: 48px; } .s5 { flex: 1; } .s6 { width: 70px; }

/* taskbar */
.task { display: flex; height: 40px; flex: none; background: #000c10; color: #fff; }
.task button { display: grid; place-items: center; flex: none; }
.task .start { width: 48px; background: #000; }
.find { display: flex; align-items: center; width: 344px; flex: none; padding: 0 15px 0 9px; gap: 5px; background: #333; }
.find input { flex: 1; min-width: 0; padding: 0; border: 0; outline: 0; background: none; color: #fff; font: 14px "Noto Sans CJK SC", sans-serif; }
.w48 { width: 48px; } .w52 { width: 52px; } .w40 { width: 40px; } .w39 { width: 39px; }
.run { background: linear-gradient(#76b9ed, #76b9ed) center bottom / 30px 2px no-repeat; }
.act { background: linear-gradient(#76b9ed, #76b9ed) center bottom / 100% 2px no-repeat #333d40; }
.link { align-self: center; margin-left: 12px; }
.two { align-self: center; text-align: center; line-height: 17px; }
.cpu { width: 64px; margin-left: 13px; }
.tray { display: flex; align-items: center; gap: 10px; margin-left: auto; }
.clock { width: 70px; margin-left: 12px; }
.note { width: 50px; padding-right: 2px; border-right: 1px solid #555; margin-right: 4px; }

/* overlays */
.ball {
  position: absolute; left: 1008px; top: -31px; width: 48px; height: 51px; padding-top: 28px;
  border: 2px solid #dfe8e0; border-radius: 24px; background: #3fc060; box-shadow: 0 1px 4px #777;
  color: #fff; font-weight: bold; text-align: center;
}
.mark { position: absolute; left: 0; top: 0; width: 1000px; height: 520px; pointer-events: none; }
.remark { position: absolute; left: 806px; top: 323px; color: #f00; font: 500 22px/24px "Noto Sans CJK SC", sans-serif; white-space: nowrap; }
.remark b { font: bold 20px/24px "Liberation Sans", sans-serif; }
```
